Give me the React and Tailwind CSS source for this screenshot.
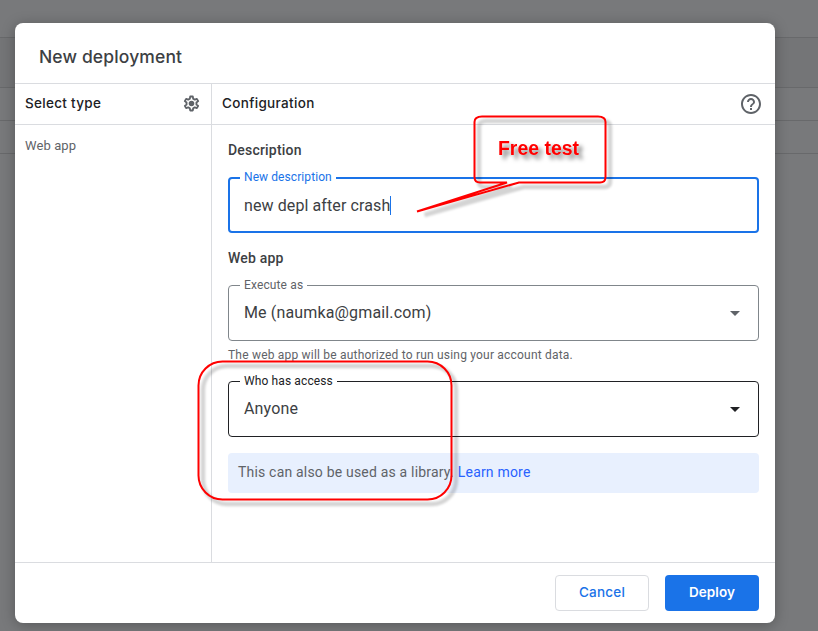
import React from "react";
import { MdHelpOutline } from "react-icons/md";

function GearIcon() {
  return (
    <svg className="mb-[2px] h-[17px] w-[17px]" viewBox="1 1 22 22" fill="none" stroke="#5f6368">
      <path
        strokeWidth="2.4"
        strokeLinejoin="round"
        d="M10.3 3h3.4l.5 2.9 2 1.15 2.75-1.05 1.7 2.95-2.25 1.85v2.4l2.25 1.85-1.7 2.95-2.75-1.05-2 1.15-.5 2.9h-3.4l-.5-2.9-2-1.15L5.050 18l-1.7-2.95L5.600 13.200v-2.400L3.350 8.950 5.050 6 7.800 7.050l2-1.150z"
      />
      <circle cx="12" cy="12" r="3.6" fill="#5f6368" stroke="none" />
    </svg>
  );
}

function Field({ label, children, box, labelStyle, caret }) {
  return (
    <div className={`relative flex h-14 items-center rounded ${box}`}>
      <span className={`absolute left-[11px] bg-white px-1 text-xs leading-4 whitespace-nowrap ${labelStyle}`}>
        {label}
      </span>
      <div className="flex flex-1 items-center text-base leading-5 text-[#3c4043]">{children}</div>
      {caret && (
        <svg className={`mr-[18px] h-[5px] w-[10px] ${caret}`} viewBox="0 0 10 5" fill="currentColor">
          <path d="M0 0h10L5 5z" />
        </svg>
      )}
    </div>
  );
}

function Annotations() {
  return (
    <svg className="pointer-events-none absolute inset-0" width="818" height="631" fill="none">
      <defs>
        <filter id="soften" x="-20%" y="-20%" width="150%" height="150%">
          <feGaussianBlur stdDeviation="1.3" />
        </filter>
        <filter id="textShade" x="-20%" y="-50%" width="150%" height="250%">
          <feDropShadow dx="4" dy="4" stdDeviation="2" floodColor="#000" floodOpacity="0.5" />
        </filter>
      </defs>
      <g filter="url(#soften)" stroke="#000" strokeOpacity="0.17" strokeWidth="4.5" transform="translate(4.500 4.500)">
        <path d="M507 182.500H480Q474.500 182.500 474.500 177V122Q474.500 116.500 482 116.500H598Q605.500 116.500 605.500 122V177Q605.500 182.500 600 182.500H519L420 210.500Z" />
        <rect x="198.500" y="361.500" width="253" height="138" rx="24" />
      </g>
      <g stroke="#f00" strokeWidth="2">
        <path
          strokeLinejoin="miter"
          strokeMiterlimit="2"
          d="M507 182.500H480Q474.500 182.500 474.500 177V122Q474.500 116.500 482 116.500H598Q605.500 116.500 605.500 122V177Q605.500 182.500 600 182.500H519L417 211.500Z"
        />
        <rect x="198.500" y="361.500" width="253" height="138" rx="24" />
      </g>
      <text
        x="498"
        y="155"
        textLength="81"
        lengthAdjust="spacingAndGlyphs"
        fill="#f00"
        filter="url(#textShade)"
        className="font-['Liberation_Sans',sans-serif] text-[20px] font-bold"
      >
        Free test
      </text>
    </svg>
  );
}

export default function App() {
  return (
    <div className="relative h-[631px] w-[818px] overflow-hidden bg-[#78797b] font-[Roboto,sans-serif]">
      <div className="h-[37px]" />
      <div className="h-[50px] border-t border-[#68696b] bg-[#747577]" />
      <div className="h-[33px] border-t border-[#68696b]" />
      <div className="h-[33px] border-t border-[#68696b]" />
      <div className="border-t border-[#68696b]" />

      <div className="absolute top-[23px] left-[15px] flex h-[600px] w-[760px] flex-col overflow-hidden rounded-lg bg-white shadow-[0_2px_14px_rgba(0,0,0,0.28)]">
        <header className="flex h-[61px] items-center border-b border-[#dadce0] pt-2 pl-6">
          <h1 className="font-[Inter,sans-serif] text-[17.5px] leading-6 font-[450] tracking-[0.13px] text-[#3c4043]">New deployment</h1>
        </header>

        <main className="flex h-[478px]">
          <aside className="w-[197px] border-r border-[#dadce0]">
            <div className="flex h-[41px] items-center justify-between border-b border-[#dadce0] pr-[11px] pl-[10px]">
              <h2 className="pb-[2px] font-[Inter,sans-serif] text-[13.5px] leading-5 font-medium tracking-[0.3px] text-[#202124]">Select type</h2>
              <GearIcon />
            </div>
            <p className="pt-[11px] pl-[10px] text-[13px] leading-5 tracking-[0.1px] text-[#5f6368]">Web app</p>
          </aside>

          <section className="flex-1">
            <div className="flex h-[41px] items-center justify-between border-b border-[#dadce0] pr-3 pl-[10px]">
              <h2 className="pb-[2px] font-[Inter,sans-serif] text-[13.5px] leading-5 font-medium tracking-[0.33px] text-[#202124]">Configuration</h2>
              <MdHelpOutline className="h-6 w-6 text-[#5f6368]" />
            </div>
            <div className="px-4 pt-[15px]">
              <h3 className="mb-[17px] text-sm leading-5 font-medium tracking-[0.2px] text-[#3c4043]">Description</h3>
              <Field label="New description" box="border-2 border-[#1a73e8] pl-[14px] pt-px" labelStyle="-top-[10px] -ml-px tracking-[0.08px] text-[#1a73e8]">
                <span className="tracking-[0.1px]">new depl after crash</span>
                <span className="h-[19px] w-px bg-[#1a73e8]" />
              </Field>
              <h3 className="mt-[15px] mb-[17px] text-sm leading-5 font-medium tracking-[0.2px] text-[#3c4043]">Web app</h3>
              <Field label="Execute as" box="border border-[#80868b] pl-[15px]" labelStyle="-top-[9px] tracking-[0.13px] text-[#5f6368]" caret="text-[#5f6368]">
                <span className="tracking-[0.15px]">Me (naumka@gmail.com)</span>
              </Field>
              <p className="mt-[6px] mb-[18px] text-xs leading-4 tracking-[0.2px] text-[#5f6368]">The web app will be authorized to run using your account data.</p>
              <Field label="Who has access" box="border border-[#202124] pl-[15px]" labelStyle="-top-[9px] tracking-[0.12px] text-[#202124]" caret="text-[#202124]">
                <span className="tracking-[0.15px]">Anyone</span>
              </Field>
              <p className="mt-4 flex h-10 items-center gap-1 rounded bg-[#e8f0fe] pb-[2px] pl-[10px] text-sm tracking-[0.19px] text-[#5f6368]">
                This can also be used as a library.{" "}
                <a className="text-[#2962ff]">Learn more</a>
              </p>
            </div>
          </section>
        </main>

        <footer className="flex flex-1 items-center justify-end gap-4 border-t border-[#dadce0] pr-4 font-[Inter,sans-serif] text-[13.5px] leading-5 font-semibold">
          <button className="h-9 w-[94px] rounded border border-[#dadce0] pb-[2px] font-medium tracking-[0.2px] text-[#1a73e8]">Cancel</button>
          <button className="h-9 w-[94px] rounded bg-[#1a73e8] pb-[2px] tracking-[0.1px] text-white">Deploy</button>
        </footer>
      </div>
      <Annotations />
    </div>
  );
}
